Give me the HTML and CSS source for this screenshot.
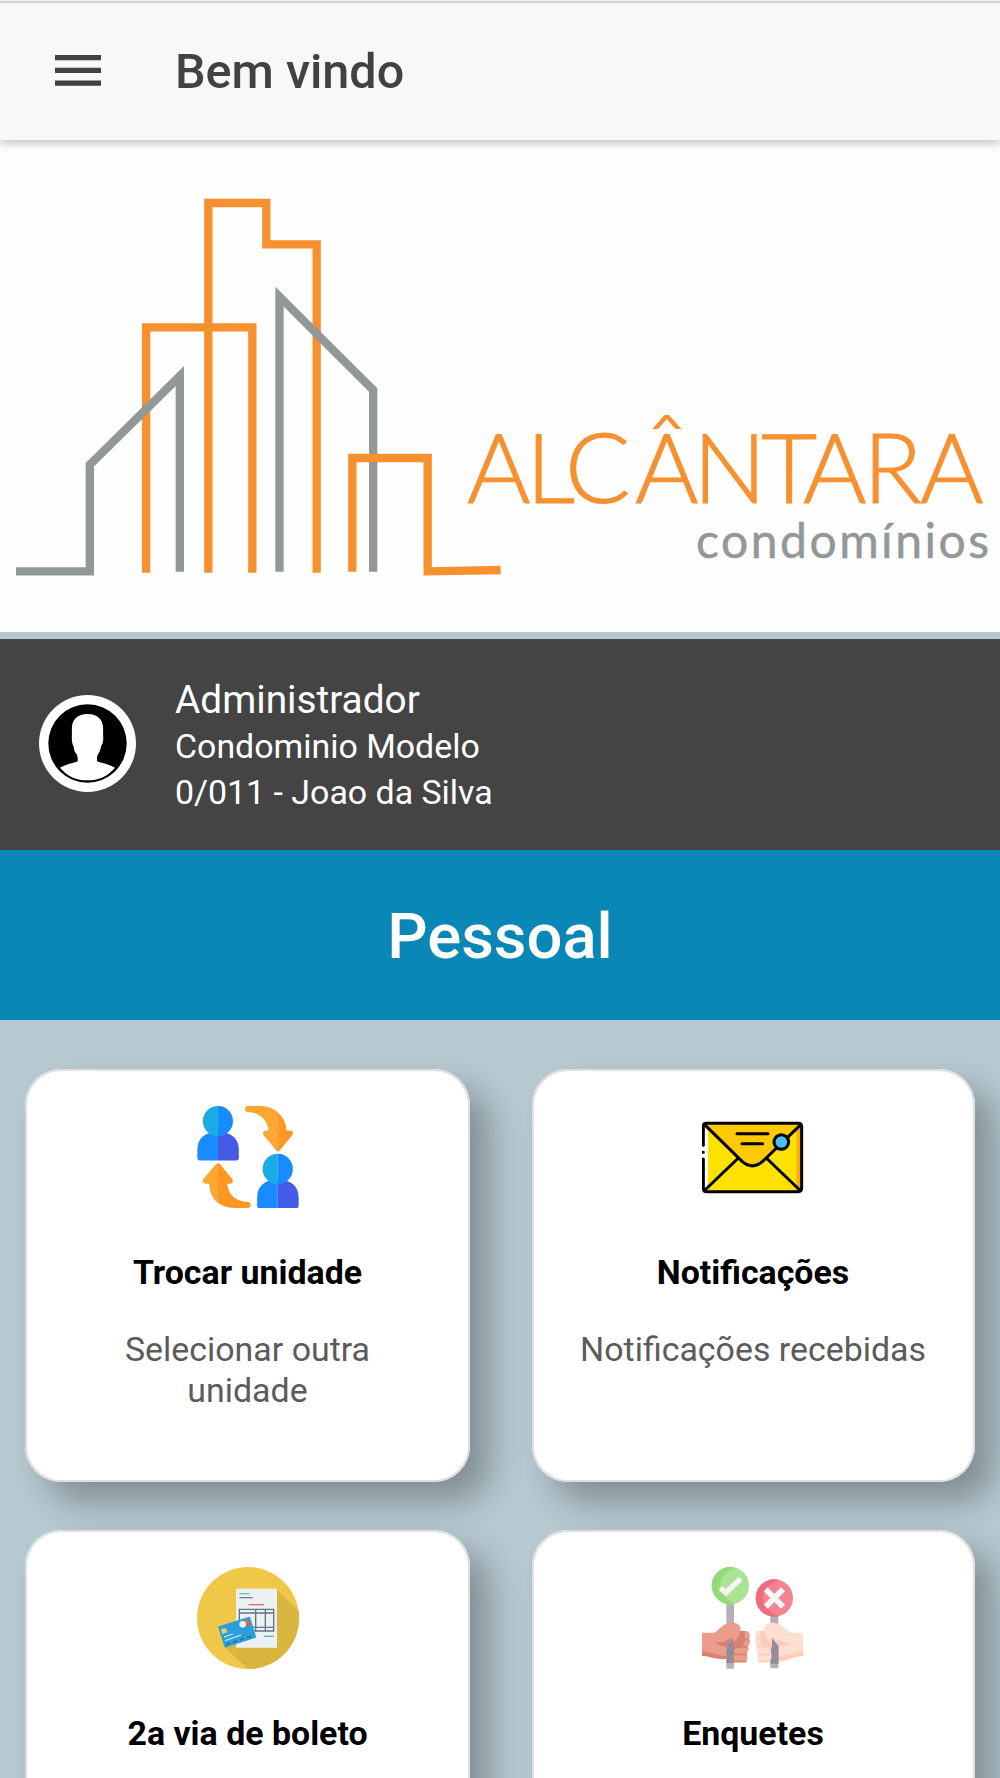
FILE: index.html
```
<!DOCTYPE html>
<html lang="pt-BR">
<head>
    <meta charset="UTF-8">
    <meta name="viewport" content="width=device-width, initial-scale=1.0">
    <title>Bem vindo</title>
    <link rel="stylesheet" href="styles.css">
</head>
<body>
    <header class="toolbar">
        <button class="menu-button" aria-label="Menu">
            <svg viewBox="0 0 46 31">
                <path stroke="#424242" stroke-width="5.200" d="M0 2.700h46M0 15.400h46M0 28.100h46"/>
            </svg>
        </button>
        <h1>Bem vindo</h1>
    </header>

    <div class="logo">
        <svg viewBox="0 140 1000 492">
            <g transform="translate(0 180) scale(.33333)" fill="none" stroke-width="25">
                <g stroke="#f7902f">
                    <path d="M438.500 1178V442H757V1178"/>
                    <path d="M625 1178V69H799V193H950V1178"/>
                </g>
                <g stroke="#929897" stroke-miterlimit="10">
                    <path d="M48 1174H269.500V854L539.500 588V1175"/>
                    <path d="M838.500 1175V350L1119.500 630V1175"/>
                </g>
                <path stroke="#f7902f" d="M1057 1175V834H1283V1174L1502 1170"/>
            </g>
            <text class="logo-name" x="467 526 565 635 693 761 803 863 920" y="502.500">ALCÂNTARA</text>
            <text class="logo-sub" x="696" y="557.500" textLength="293">condomínios</text>
        </svg>
    </div>

    <section class="user">
        <svg class="avatar" viewBox="0 0 292 292">
            <circle cx="146" cy="146" r="146" fill="#fff"/>
            <circle cx="146" cy="146" r="118" fill="#000"/>
            <path fill="#fff" d="M146 57c31 0 47 18 47 43v22c2 15-2 26-6 32-3 15-7 22-11 27-2 10-2 18 0 19 15 5 35 9 53 19-23 27-50 38-83 38s-60-11-83-38c18-10 38-14 53-19 1-3 1-11-2-21-5-5-9-12-10-25-4-6-6-17-5-32v-22c0-25 17-43 47-43z"/>
        </svg>
        <div class="user-info">
            <h2>Administrador</h2>
            <p>Condominio Modelo</p>
            <p>0/011 - Joao da Silva</p>
        </div>
    </section>

    <h2 class="section-title">Pessoal</h2>

    <main class="cards">
        <div class="card">
            <svg class="icon" viewBox="50 45 307 307">
                <defs>
                    <g id="person">
                        <path fill="#178bff" d="M51 200v-23c0-33 20-54 62-54v86H59q-8 0-8-9z"/>
                        <path fill="#445be6" d="M113 123c42 0 63 21 63 54v23q0 9-8 9h-55z"/>
                        <path fill="#19abe5" d="M113 45a45.500 45.500 0 0 0 0 91z"/>
                        <path fill="#178bff" d="M113 45a45.500 45.500 0 0 1 0 91z"/>
                    </g>
                </defs>
                <use href="#person"/>
                <use href="#person" x="180" y="144"/>
                <path fill="#ffa733" d="M203 45h38c22 0 40 7 53 20v117q-4 0-7-5l-36-43q-7-13 6-15h8c-2-32-28-55-62-56-12-1-12-17 0-18z"/>
                <path fill="#ff9822" d="M294 65c16 14 25 32 25 54h12q12 2 6 13l-36 45q-3 5-7 5z"/>
                <path fill="#ff9822" d="M113 217q4 0 7 4l36 44q6 12-6 14h-9c2 34 28 54 62 55 12 1 12 17 0 18h-38c-20 0-38-6-52-16z"/>
                <path fill="#ffa733" d="M113 217v119c-18-13-26-34-26-57H75q-12-2-6-14l36-43q4-5 8-5z"/>
            </svg>
            <h3>Trocar unidade</h3>
            <p>Selecionar outra unidade</p>
        </div>

        <div class="card">
            <svg class="icon" viewBox="51 15 306 306">
                <rect x="55" y="67" width="295" height="205" rx="10" fill="#fff"/>
                <path fill="#ffe100" d="M69 80l280-8v199H69z"/>
                <path fill="#ffa905" d="M335 75h14v196h-14z"/>
                <path fill="#fdca00" d="M60 68h286L235 180q-33 30-66 0z"/>
                <path fill="#fff" d="M57 75l12 8v174l-12 11z"/>
                <g fill="none" stroke="#000" stroke-width="9" stroke-linecap="round" stroke-linejoin="round">
                    <path d="M55 133V76q0-9 9-9h276q10 0 10 10v185q0 10-10 10H65q-10 0-10-10v-88M55 154h.1"/>
                    <path d="M61 73l111 109q30 25 60 0L345 73M157 174l-97 93M247 174l97 93M156 98h93M171 128h62"/>
                    <circle cx="289" cy="123" r="22" fill="#4bbff8"/>
                </g>
            </svg>
            <h3>Notificações</h3>
            <p>Notificações recebidas</p>
        </div>

        <div class="card">
            <svg class="icon" viewBox="51 49 306 306">
                <circle cx="204" cy="202" r="153" fill="#efc84a"/>
                <path fill="#d9b540" d="M291 118l65 62a153 153 0 0 1-152 175l-68-64z"/>
                <path fill="#ebf0f3" d="M168 114h123v177H168z"/>
                <path stroke="#5fc99c" stroke-width="4" d="M178 129h30"/>
                <path stroke="#728094" stroke-width="4" d="M178 141h40"/>
                <path stroke="#e66c5b" stroke-width="4" d="M206 162h46"/>
                <path stroke="#4bb0df" stroke-width="4" d="M252 257h29"/>
                <g fill="none" stroke="#657386" stroke-width="4">
                    <path d="M178 176h103v65H178zM178 187h103M178 230h103M227 176v65M256 176v65"/>
                </g>
                <path fill="#29a0da" stroke="#29a0da" stroke-width="5" stroke-linejoin="round" d="M117 229l91-28 18 58-90 29z"/>
                <path fill="#f1cd59" d="M123 236l15-4 4 13-15 5z"/>
                <circle cx="199" cy="217" r="10" fill="#ee5c4b"/>
                <circle cx="188" cy="221" r="10" fill="#ebf0f3"/>
                <g fill="none" stroke-width="3">
                    <path stroke="#e7f3f8" d="M132 259l27-9M135 270l48-17"/>
                    <path stroke="#1c6d9b" stroke-width="4" stroke-dasharray="13 9" d="M138 281l82-26"/>
                </g>
            </svg>
            <h3>2a via de boleto</h3>
        </div>

        <div class="card">
            <svg class="icon" viewBox="51 50 306 306">
                <path fill="#b9adb8" d="M124 155h23v200h-23zM256 195h24v159h-24z"/>
                <circle cx="136" cy="106" r="56" fill="#abe394"/>
                <path fill="#94da7b" d="M136 50a56 56 0 0 0 0 112q10 0 15-2c-60-22-60-86 0-108q-7-2-15-2z"/>
                <path fill="none" stroke="#f5f5f5" stroke-width="16" d="M106 113l17 14 44-42"/>
                <circle cx="268" cy="143" r="56" fill="#f68394"/>
                <path fill="#ef6c7e" d="M268 87a56 56 0 0 0 0 112q9 0 15-2c-65-22-65-86 0-108q-7-2-15-2z"/>
                <path stroke="#f7f7f7" stroke-width="17" d="M242 117l52 52M294 117l-52 52"/>
                <!-- left hand -->
                <path fill="#eb9c8b" d="M51 247h36c17-9 27-29 52-30 20 0 29 7 28 25h19q15 10 6 23 7 13-3 22 5 13-4 20 5 10-1 28h-39q-10-8-3-21v-30l-18 8v34c-26 0-45-2-58-9H51z"/>
                <path fill="#d98170" d="M167 242h12v30l-8 17-28 10-4-22q20-5 28-35zM90 273q16 10 52-12l-17 27q-28 0-35-15zM51 303c22 3 43 11 73 14v9c-28 3-40-9-73-9z"/>
                <path fill="none" stroke="#d98170" stroke-width="5" stroke-linecap="round" d="M165 268h24M149 290h35M148 312h34M148 334h34"/>
                <path fill="#968b98" d="M124 288l20-26v26q7 17 0 28 6 12 3 22h-23z"/>
                <!-- right hand -->
                <path fill="#ffdfd1" d="M354 247h-36c-17-9-27-29-54-30-20 0-29 9-27 25h-18q-15 10-6 23-6 13 3 22-5 13 4 20-6 10 1 28h35q14-8 3-21v-30l21 8v41c26 0 45-8 58-15h16z"/>
                <path fill="#ffcbbd" d="M237 242h-11v30l10 18 25 9 2-22q-20-5-26-35zM321 273q-16 10-57-12l17 27q33 0 40-15zM354 303c-22 3-43 11-73 14v14c28 0 40-14 73-14z"/>
                <path fill="none" stroke="#ffcbbd" stroke-width="5" stroke-linecap="round" d="M215 266h21M219 289h32M223 312h32M221 334h32"/>
                <path fill="#968b98" d="M281 288l-20-26v26q-7 17 0 28-6 12-5 24h25z"/>
            </svg>
            <h3>Enquetes</h3>
        </div>
    </main>
</body>
</html>
```
FILE: styles.css
```
* {
    box-sizing: border-box;
}
body {
    margin: 0;
    height: 1778px;
    overflow: hidden;
    font-family: Roboto, Arial, sans-serif;
    background-color: #b6c8d0;
    color: #000;
}
h1, h2, h3, p {
    margin: 0;
}
svg {
    display: block;
}
.toolbar {
    display: flex;
    align-items: center;
    height: 140px;
    padding-left: 55px;
    background-color: #f8f8f8;
    border-top: 1px solid #f4f4f4;
    box-shadow: inset 0 2px 0 #d2d2d2, 0 4px 8px rgba(0,0,0,0.22);
    position: relative;
}
.toolbar h1 {
    margin-left: 74px;
    padding-top: 3px;
    font-size: 48.500px;
    line-height: 56px;
    font-weight: 500;
    color: #424242;
}
.menu-button {
    width: 46px;
    padding: 0;
    border: none;
    background: none;
}
.logo {
    height: 492px;
    margin-bottom: 7px;
    background-color: #fefefe;
}
.logo svg {
    width: 1000px;
    height: 492px;
}
.logo-name {
    font-family: Lato, sans-serif;
    font-weight: 300;
    font-size: 97px;
    fill: #f7902f;
    stroke: #f7902f;
    stroke-width: 1px;
}
.logo-sub {
    font-family: Lato, sans-serif;
    font-weight: 400;
    font-size: 48px;
    fill: #929897;
    stroke: #929897;
    stroke-width: 0.5px;
}
.user {
    display: flex;
    height: 211px;
    padding-left: 39px;
    background-color: #444;
    color: #fff;
}
.avatar {
    width: 97px;
    height: 97px;
    margin-top: 56px;
}
.user-info {
    padding: 37px 0 0 39px;
}
.user-info h2 {
    font-size: 38.800px;
    line-height: 48px;
    font-weight: 400;
}
.user-info p {
    font-size: 33.900px;
    line-height: 46px;
}
.section-title {
    height: 170.400px;
    padding-top: 1px;
    background-color: #0987b7;
    color: #fff;
    font-size: 63.400px;
    line-height: 170px;
    font-weight: 500;
    text-align: center;
}
.cards {
    display: grid;
    grid-template-columns: 445px 443px;
    column-gap: 61.500px;
    row-gap: 48.500px;
    height: 758px;
    padding: 49px 25px 0;
    overflow: hidden;
}
.card {
    height: 412.500px;
    padding: 36.300px 45px 0;
    border-radius: 36px;
    background-color: #fff;
    box-shadow: inset 0 0 0 2px #dfdfdf, 20px 20px 32px rgba(0,0,0,0.28);
    text-align: center;
}
.icon {
    width: 102px;
    height: 102px;
    margin: 0 auto;
}
.card h3 {
    margin-top: 45.500px;
    font-size: 33.900px;
    line-height: 40px;
    font-weight: 700;
}
.card p {
    margin-top: 36px;
    font-size: 33.900px;
    line-height: 41px;
    color: #5b5b5b;
}
```
